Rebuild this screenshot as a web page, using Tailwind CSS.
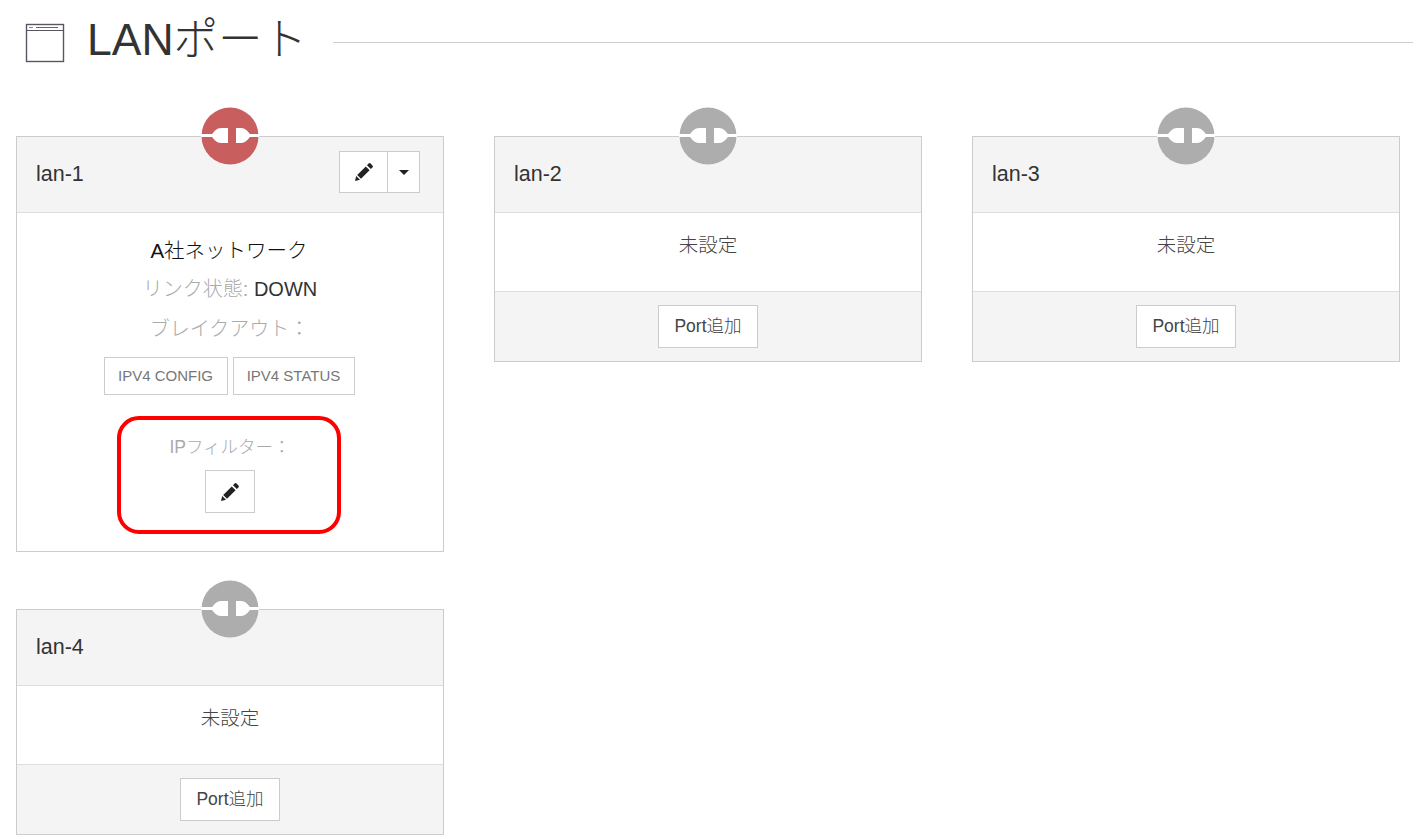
<!doctype html>
<html><head><meta charset="utf-8"><script src="https://cdn.jsdelivr.net/npm/@tailwindcss/browser@4"></script></head>
<body class="bg-white overflow-hidden font-['Liberation_Sans','Noto_Sans_CJK_JP',sans-serif] text-[#333]">
<div class="w-[1420px] h-[839px] relative">
<header class="h-[80px] flex items-center pl-[25px]">
<svg class="w-[40px] h-[40px] mt-[6px] shrink-0" viewBox="0 0 40 40" fill="none"><rect x="1.5" y="1.5" width="37" height="37" fill="#fff" stroke="#5a5560" stroke-width="1.4"/><path d="M1.5 7.5H38.5" stroke="#5a5560" stroke-width="1.2"/><path d="M11 4.5H33" stroke="#666" stroke-width="1"/><path d="M4 4.5H8" stroke="#888" stroke-width="1"/></svg>
<h1 class="text-[44.5px] leading-none font-light ml-[22px] whitespace-nowrap mt-[1px]">LANポート</h1>
<div class="h-px bg-[#ccc] flex-1 ml-[26px] mr-[7px] mt-[4px]"></div>
</header>
<main class="flex flex-wrap items-start gap-x-[50px] gap-y-[57px] pl-[16px] pt-[56px]">

<section class="w-[428px] h-[416px] border border-[#ccc] relative flex flex-col">
<svg class="absolute left-[183.5px] -top-[30px]" width="58" height="58" viewBox="0 0 58 58"><circle cx="29" cy="29" r="28.5" fill="#c95e5e"/><path d="M0 28.5H14M46 28.5H58" stroke="#fff" stroke-width="3"/><path d="M10 28.5C12 26 15 21 20 21H27V36H20C15 36 12 31 10 28.5ZM50 28.5C48 26 45 21 40 21H35V36H40C45 36 48 31 50 28.5Z" fill="#fff"/></svg>
<div class="h-[76px] bg-[#f4f4f4] border-b border-[#ddd] flex items-center justify-between pl-[19px] pr-[23px]">
<span class="text-[21.5px] mb-[1px]">lan-1</span>
<div class="flex h-[42px] mb-[5px] border border-[#ccc] bg-white">
<div class="w-[48px] flex items-center justify-center border-r border-[#ccc]"><svg width="18" height="18" viewBox="0 0 18 18" fill="#222"><path d="M0 18 1.2 13 5 16.8ZM2.2 12 10.8 3.4 14.6 7.2 6 15.8ZM12 2.2 13.6.6a1.4 1.4 0 0 1 2 0L17.4 2.4a1.4 1.4 0 0 1 0 2L15.8 6Z"/></svg></div>
<div class="w-[31px] flex items-center justify-center"><div class="w-0 h-0 border-x-[5px] border-x-transparent border-t-[5px] border-t-[#222]"></div></div>
</div></div>
<div class="flex-1 flex flex-col items-center font-light">
<p class="text-[20.5px] leading-[28px] mt-[24px] mr-[2px] text-[#111]">A社ネットワーク</p>
<p class="text-[20px] leading-[28px] mt-[10px] text-[#aaa]">リンク状態: <span class="text-[#333]">DOWN</span></p>
<p class="text-[20px] leading-[28px] mt-[12px] mr-[1px] text-[#aaa]">ブレイクアウト：</p>
<div class="flex gap-[5px] mt-[14px] mr-[2px] font-normal">
<div class="w-[124px] h-[38px] border border-[#ccc] flex items-center justify-center text-[15px] text-[#777]">IPV4 CONFIG</div>
<div class="w-[122px] h-[38px] border border-[#ccc] flex items-center justify-center text-[15px] text-[#777]">IPV4 STATUS</div>
</div>
<p class="text-[17.5px] leading-[24px] mt-[40px] text-[#aaa]">IPフィルター：</p>
<div class="w-[50px] h-[43px] mt-[11px] border border-[#ccc] flex items-center justify-center"><svg width="18" height="18" viewBox="0 0 18 18" fill="#222"><path d="M0 18 1.2 13 5 16.8ZM2.2 12 10.8 3.4 14.6 7.2 6 15.8ZM12 2.2 13.6.6a1.4 1.4 0 0 1 2 0L17.4 2.4a1.4 1.4 0 0 1 0 2L15.8 6Z"/></svg></div>
</div>
<div class="absolute left-[100px] top-[279px] w-[224px] h-[118px] border-[4px] border-[#f00] rounded-[22px]"></div>
</section>

<section class="w-[428px] h-[226px] border border-[#ccc] relative flex flex-col">
<svg class="absolute left-[183.5px] -top-[30px]" width="58" height="58" viewBox="0 0 58 58"><circle cx="29" cy="29" r="28.5" fill="#adadad"/><path d="M0 28.5H14M46 28.5H58" stroke="#fff" stroke-width="3"/><path d="M10 28.5C12 26 15 21 20 21H27V36H20C15 36 12 31 10 28.5ZM50 28.5C48 26 45 21 40 21H35V36H40C45 36 48 31 50 28.5Z" fill="#fff"/></svg>
<div class="h-[76px] bg-[#f4f4f4] border-b border-[#ddd] flex items-center pl-[19px]"><span class="text-[21.5px] mb-[1px]">lan-2</span></div>
<div class="h-[79px] border-b border-[#ddd] flex justify-center pt-[18px]"><span class="text-[19.5px] font-light leading-[28px] text-[#444]">未設定</span></div>
<div class="flex-1 bg-[#f4f4f4] flex items-center justify-center"><div class="w-[100px] h-[43px] bg-white border border-[#ccc] flex items-center justify-center text-[17.5px] font-light text-[#444]">Port追加</div></div>
</section>

<section class="w-[428px] h-[226px] border border-[#ccc] relative flex flex-col">
<svg class="absolute left-[183.5px] -top-[30px]" width="58" height="58" viewBox="0 0 58 58"><circle cx="29" cy="29" r="28.5" fill="#adadad"/><path d="M0 28.5H14M46 28.5H58" stroke="#fff" stroke-width="3"/><path d="M10 28.5C12 26 15 21 20 21H27V36H20C15 36 12 31 10 28.5ZM50 28.5C48 26 45 21 40 21H35V36H40C45 36 48 31 50 28.5Z" fill="#fff"/></svg>
<div class="h-[76px] bg-[#f4f4f4] border-b border-[#ddd] flex items-center pl-[19px]"><span class="text-[21.5px] mb-[1px]">lan-3</span></div>
<div class="h-[79px] border-b border-[#ddd] flex justify-center pt-[18px]"><span class="text-[19.5px] font-light leading-[28px] text-[#444]">未設定</span></div>
<div class="flex-1 bg-[#f4f4f4] flex items-center justify-center"><div class="w-[100px] h-[43px] bg-white border border-[#ccc] flex items-center justify-center text-[17.5px] font-light text-[#444]">Port追加</div></div>
</section>

<section class="w-[428px] h-[226px] border border-[#ccc] relative flex flex-col">
<svg class="absolute left-[183.5px] -top-[30px]" width="58" height="58" viewBox="0 0 58 58"><circle cx="29" cy="29" r="28.5" fill="#adadad"/><path d="M0 28.5H14M46 28.5H58" stroke="#fff" stroke-width="3"/><path d="M10 28.5C12 26 15 21 20 21H27V36H20C15 36 12 31 10 28.5ZM50 28.5C48 26 45 21 40 21H35V36H40C45 36 48 31 50 28.5Z" fill="#fff"/></svg>
<div class="h-[76px] bg-[#f4f4f4] border-b border-[#ddd] flex items-center pl-[19px]"><span class="text-[21.5px] mb-[1px]">lan-4</span></div>
<div class="h-[79px] border-b border-[#ddd] flex justify-center pt-[18px]"><span class="text-[19.5px] font-light leading-[28px] text-[#444]">未設定</span></div>
<div class="flex-1 bg-[#f4f4f4] flex items-center justify-center"><div class="w-[100px] h-[43px] bg-white border border-[#ccc] flex items-center justify-center text-[17.5px] font-light text-[#444]">Port追加</div></div>
</section>
</main>
</div>
</body></html>
